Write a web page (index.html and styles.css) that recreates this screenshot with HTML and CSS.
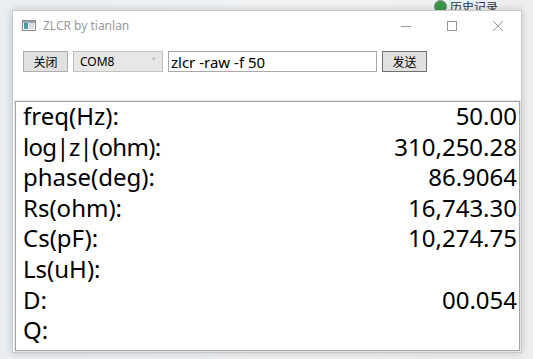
FILE: index.html
```html
<!DOCTYPE html>
<html lang="zh-cn">
<head>
    <meta charset="UTF-8">
    <meta name="viewport" content="width=device-width, initial-scale=1.0">
    <title>ZLCR by tianlan</title>
    <link rel="stylesheet" href="styles.css">
</head>
<body>
    <div class="desktop">
        <!-- janela de tras, so aparece o canto -->
        <div class="behind">
            <span class="behind-icon"></span>
            <span>历史记录</span>
        </div>

        <div class="window">
            <div class="titlebar">
                <svg class="app-icon" width="14" height="11" viewBox="0 0 14 11">
                    <rect x="0.5" y="0.5" width="13" height="10" fill="#fff" stroke="#8a8a8a"/>
                    <rect x="1" y="1" width="12" height="2" fill="#9aa8b8"/>
                    <rect x="2" y="3" width="4" height="6" fill="#4a9aa8"/>
                    <rect x="7" y="3" width="5" height="6" fill="#d8dde2"/>
                </svg>
                <span class="title">ZLCR by tianlan</span>
                <div class="caption">
                    <button class="cap-btn">
                        <svg width="10" height="10" viewBox="0 0 10 10"><path d="M0 5.5H10" stroke="#999" stroke-width="1"/></svg>
                    </button>
                    <button class="cap-btn">
                        <svg width="10" height="10" viewBox="0 0 10 10"><rect x="0.5" y="0.5" width="9" height="9" fill="none" stroke="#999"/></svg>
                    </button>
                    <button class="cap-btn">
                        <svg width="10" height="10" viewBox="0 0 10 10"><path d="M0 0L10 10M10 0L0 10" stroke="#999" stroke-width="1"/></svg>
                    </button>
                </div>
            </div>

            <div class="toolbar">
                <button class="btn">关闭</button>
                <div class="combo">
                    <span>COM8</span>
                    <span class="chevron">˅</span>
                </div>
                <input class="cmd" type="text" value="zlcr -raw -f 50">
                <button class="btn btn-default">发送</button>
            </div>

            <div class="readout">
                <div class="row"><span>freq(Hz):</span><span>50.00</span></div>
                <div class="row"><span class="tight">log|z|(ohm):</span><span>310,250.28</span></div>
                <div class="row"><span>phase(deg):</span><span>86.9064</span></div>
                <div class="row"><span>Rs(ohm):</span><span>16,743.30</span></div>
                <div class="row"><span>Cs(pF):</span><span>10,274.75</span></div>
                <div class="row"><span>Ls(uH):</span><span></span></div>
                <div class="row"><span>D:</span><span>00.054</span></div>
                <div class="row"><span>Q:</span><span></span></div>
            </div>
        </div>
    </div>
</body>
</html>
```

FILE: styles.css
```css
body {
    margin: 0;
    padding: 0;
    background: #eef0f3;
    font-family: "Noto Sans", "Noto Sans CJK SC", sans-serif;
    overflow: hidden;
}

.desktop {
    position: relative;
    width: 533px;
    height: 359px;
    padding: 10px 0 0 12px;
    box-sizing: border-box;
    background: linear-gradient(90deg, #e9eef3 0%, #f2f3f4 60%, #eceef0 100%);
}

.behind {
    position: absolute;
    top: 0;
    left: 434px;
    display: flex;
    align-items: center;
    gap: 3px;
    font-size: 12px;
    line-height: 12px;
    color: #333;
    font-family: "Noto Sans CJK SC", sans-serif;
}

.behind-icon {
    width: 11px;
    height: 11px;
    border-radius: 50%;
    background: #3a9a48;
    border: 1px solid #888;
}

.window {
    position: relative;
    width: 510px;
    height: 343px;
    background: #fff;
    border: 1px solid #c9c9c9;
    box-sizing: border-box;
    box-shadow: 0 0 8px rgba(0, 0, 0, 0.18);
    display: flex;
    flex-direction: column;
}

.titlebar {
    height: 29px;
    display: flex;
    align-items: center;
    padding-left: 9px;
}

.app-icon {
    margin-right: 7px;
}

.title {
    font-size: 12px;
    color: #999;
}

.caption {
    margin-left: auto;
    display: flex;
    align-self: stretch;
}

.cap-btn {
    width: 46px;
    border: none;
    background: none;
    padding: 0;
    display: flex;
    align-items: center;
    justify-content: center;
}

.toolbar {
    display: flex;
    gap: 5px;
    padding: 11px 0 0 10px;
    height: 21px;
}

.btn {
    width: 45px;
    height: 21px;
    padding: 0;
    border: 1px solid #adadad;
    background: #e1e1e1;
    font-family: "Noto Sans CJK SC", sans-serif;
    font-size: 12px;
    color: #000;
}

.btn-default {
    border-color: #707070;
}

.combo {
    width: 90px;
    height: 21px;
    box-sizing: border-box;
    border: 1px solid #c2c2c2;
    background: #e7e7e7;
    display: flex;
    align-items: center;
    padding: 0 6px;
    font-size: 12px;
}

.chevron {
    margin-left: auto;
    margin-right: 1px;
    font-size: 10px;
    color: #555;
}

.cmd {
    width: 209px;
    height: 21px;
    box-sizing: border-box;
    border: 1px solid #a9a9a9;
    padding: 0 2px;
    font-family: "Noto Sans", sans-serif;
    font-size: 15px;
    color: #000;
    outline: none;
}

.readout {
    margin: 29px 1px 1px 2px;
    flex: 1;
    border: 1px solid #a6a6a6;
    box-shadow: 0 0 0 1px #e6e6e6;
    padding: 0 2px 0 7px;
    font-size: 24px;
    color: #000;
}

.row {
    display: flex;
    justify-content: space-between;
    height: 30.6px;
    line-height: 30.6px;
    margin-top: -1px;
    margin-bottom: 1px;
}

.tight {
    letter-spacing: -0.7px;
}
```
